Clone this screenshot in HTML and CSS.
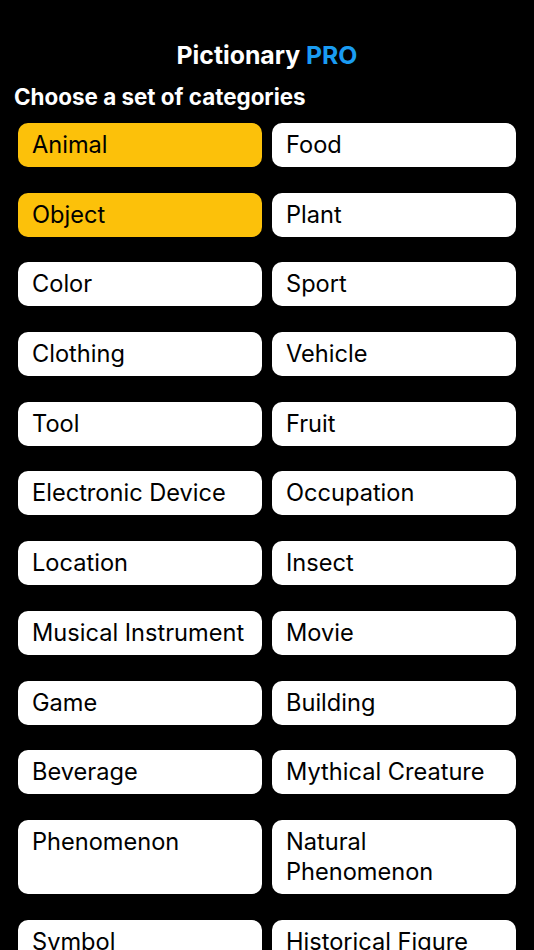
FILE: index.html
```html
<!DOCTYPE html>
<html lang="en">
<head>
  <meta charset="UTF-8">
  <title>Pictionary PRO</title>
  <link rel="stylesheet" href="styles.css">
</head>
<body>

<div class="app">
  <h1 class="title">Pictionary <span class="pro">PRO</span></h1>
  <h2 class="subtitle">Choose a set of categories</h2>

  <div class="categories">
    <div class="cat selected">Animal</div>
    <div class="cat">Food</div>
    <div class="cat selected">Object</div>
    <div class="cat">Plant</div>
    <div class="cat">Color</div>
    <div class="cat">Sport</div>
    <div class="cat">Clothing</div>
    <div class="cat">Vehicle</div>
    <div class="cat">Tool</div>
    <div class="cat">Fruit</div>
    <div class="cat">Electronic Device</div>
    <div class="cat">Occupation</div>
    <div class="cat">Location</div>
    <div class="cat">Insect</div>
    <div class="cat">Musical Instrument</div>
    <div class="cat">Movie</div>
    <div class="cat">Game</div>
    <div class="cat">Building</div>
    <div class="cat">Beverage</div>
    <div class="cat">Mythical Creature</div>
    <div class="cat">Phenomenon</div>
    <div class="cat">Natural Phenomenon</div>
    <div class="cat">Symbol</div>
    <div class="cat">Historical Figure</div>
  </div>
</div>

</body>
</html>
```
FILE: styles.css
```css
body {
  margin: 0;
  background: #000;
  color: #fff;
  font-family: Inter, 'Noto Sans', sans-serif;
  overflow: hidden;
  height: 950px;
}
.app {
  padding-top: 40px;
}
.title {
  margin: 0;
  text-align: center;
  font-size: 24.8px;
  line-height: 30px;
  font-weight: 700;
}
.pro {
  color: #1a9cf2;
}
.subtitle {
  margin: 13px 0 0;
  padding-left: 14px;
  font-size: 22.4px;
  line-height: 28px;
  font-weight: 700;
}
.categories {
  display: grid;
  grid-template-columns: 1fr 1fr;
  column-gap: 10px;
  row-gap: 25.7px;
  padding: 12px 18px 0;
}
.cat {
  font-size: 23.6px;
  line-height: 30px;
  padding: 7px 14px;
  border-radius: 10px;
  background: #fff;
  color: #000;
  cursor: pointer;
}
.cat.selected {
  background: #fcc10a;
}
```
